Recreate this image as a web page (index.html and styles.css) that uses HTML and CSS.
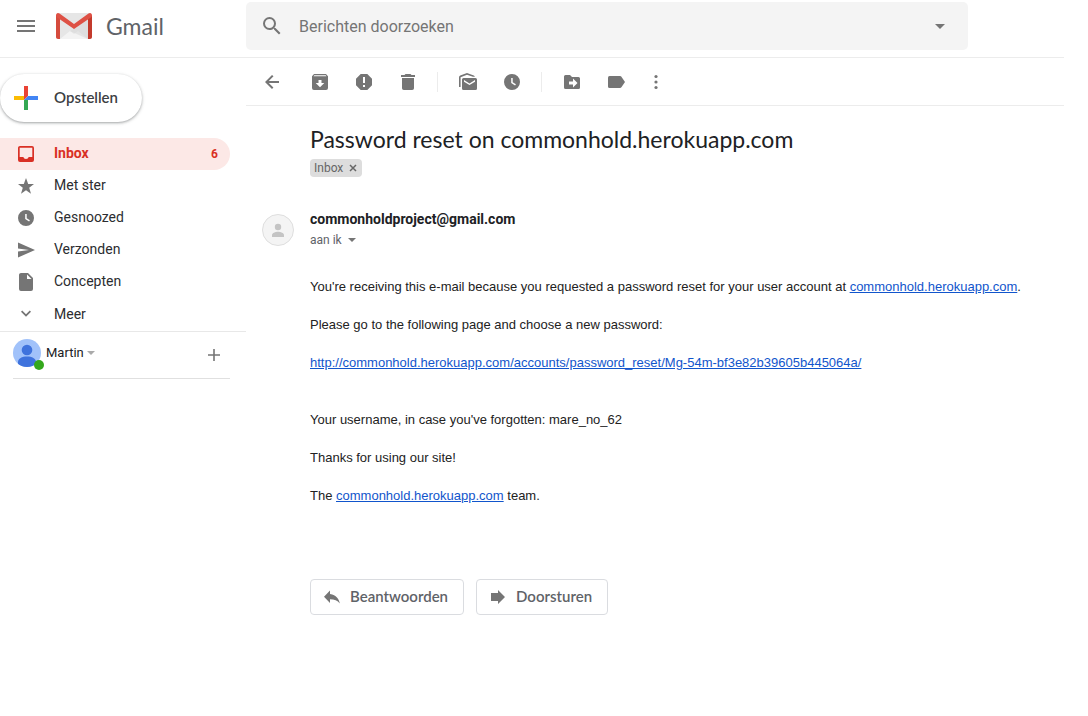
FILE: index.html
```html
<!DOCTYPE html>
<html lang="nl">
<head>
<meta charset="utf-8">
<title>Gmail</title>
<link rel="stylesheet" href="styles.css">
</head>
<body>
<header class="topbar">
  <div class="brand">
    <button class="icon-btn" aria-label="Hoofdmenu"><svg class="icon icon-menu" viewBox="0 0 24 24"><path d="M3 18h18v-2H3v2zm0-5h18v-2H3v2zm0-7v2h18V6H3z"/></svg></button>
    <svg class="logo" viewBox="0 0 36 26" aria-hidden="true">
      <path fill="#e6e6e6" d="M2 0h32v26H2z"/>
      <path fill="#f3f3f3" d="M4 26 14 18l4 3 4-3 10 8z"/>
      <path fill="#d6d6d6" d="M18 16 32 6v20L14 18z" opacity=".5"/>
      <path fill="#d54b3d" d="M0 2.300V24c0 1.200.8 2 2 2h2V5z"/>
      <path fill="#c33a2c" d="M36 2.300V24c0 1.200-.8 2-2 2h-2V5z"/>
      <path fill="#de5145" d="M2 0c.6 0 1 .2 1.500.5L18 11 32.500.5C33 .2 33.400 0 34 0c1.200 0 2 1 2 2.300 0 1-.3 1.500-1.200 2.100L18 16 1.200 4.400C.3 3.800 0 3.300 0 2.300 0 1 .8 0 2 0z"/>
    </svg>
    <span class="brand-name">Gmail</span>
  </div>
  <form class="search" role="search">
    <button class="icon-btn" type="button" aria-label="Zoeken"><svg class="icon icon-search" viewBox="0 0 24 24"><path d="M15.500 14h-.79l-.28-.27A6.471 6.471 0 0 0 16 9.500 6.500 6.500 0 1 0 9.500 16c1.610 0 3.090-.59 4.230-1.570l.27.28v.79l5 4.990L20.490 19l-4.990-5zm-6 0C7.010 14 5 11.990 5 9.500S7.010 5 9.500 5 14 7.010 14 9.500 11.990 14 9.500 14z"/></svg></button>
    <input class="search-input" type="text" aria-label="Berichten doorzoeken" placeholder="Berichten doorzoeken">
    <button class="icon-btn" type="button" aria-label="Zoekopties"><svg class="icon icon-search" viewBox="0 0 24 24"><path d="m7 10 5 5 5-5z"/></svg></button>
  </form>
</header>
<div class="layout">
  <aside class="sidebar">
    <button class="compose">
      <svg class="compose-plus" viewBox="0 0 24 24"><path fill="#ea4335" d="M10 0h4v10l-4 4z"/><path fill="#fbbc04" d="M0 10h10v4H0z"/><path fill="#34a853" d="M10 14h4v10h-4z"/><path fill="#4285f4" d="M14 10h10v4H10z"/></svg>
      <span class="label">Opstellen</span>
    </button>
    <nav class="folders">
      <a class="folder folder-active" href="#"><svg class="icon" viewBox="0 0 20 20"><path fill-rule="evenodd" d="M4 2h12a2 2 0 0 1 2 2v12a2 2 0 0 1-2 2H4a2 2 0 0 1-2-2V4c0-1.100.9-2 2-2zm-.3 1.700v9.300h3.600a2.800 2.800 0 0 0 5.400 0h3.600V3.700z"/></svg><span class="folder-name">Inbox</span><span class="count">6</span></a>
      <a class="folder" href="#"><svg class="icon" viewBox="0 0 20 20"><path d="m10 14.300 5 3.400-1.800-6L18 8h-5.800L10 2 7.800 8H2l4.800 3.700-1.800 6z"/></svg><span class="folder-name">Met ster</span></a>
      <a class="folder" href="#"><svg class="icon" viewBox="0 0 20 20"><path fill-rule="evenodd" d="M10 2a8 8 0 1 0 0 16 8 8 0 0 0 0-16zM9.200 6h1.500v4.300l3.200 2-.8 1.300-3.900-2.500z"/></svg><span class="folder-name">Gesnoozed</span></a>
      <a class="folder" href="#"><svg class="icon" viewBox="0 0 20 20"><path d="M2 2.500 19 10 2 17.500v-6L13 10 2 8.500z"/></svg><span class="folder-name">Verzonden</span></a>
      <a class="folder" href="#"><svg class="icon" viewBox="0 0 20 20"><path fill-rule="evenodd" d="M5 1h7l5 5v11a2 2 0 0 1-2 2H5a2 2 0 0 1-2-2V3c0-1.100.9-2 2-2zm6 1.500V7h4.500z"/></svg><span class="folder-name">Concepten</span></a>
      <a class="folder folder-more" href="#"><svg class="icon" viewBox="0 0 20 20"><path d="m6.200 6.500 3.800 3.800 3.800-3.800 1.200 1.200-5 5-5-5z"/></svg><span class="folder-name">Meer</span></a>
    </nav>
    <section class="account">
      <div class="account-avatar">
        <svg class="account-face" viewBox="0 0 28 28"><defs><clipPath id="face"><circle cx="14" cy="14" r="14"/></clipPath></defs><g clip-path="url(#face)"><path fill="#a1c2fa" d="M0 0h28v28H0z"/><circle cx="14" cy="11" r="5.300" fill="#3f73dd"/><path fill="#3f73dd" d="M5 23c0-3.500 4-5.500 9-5.500s9 2 9 5.500v5H5z"/></g></svg>
        <span class="presence"></span>
      </div>
      <button class="account-name">Martin<svg class="caret" viewBox="0 0 8 4"><path d="M0 0h8L4 4z"/></svg></button>
      <button class="icon-btn account-add" aria-label="Nieuwe chat"><svg class="icon" viewBox="0 0 20 20"><path d="M9.200 4h1.600v5.200H16v1.600h-5.200V16H9.200v-5.200H4V9.200h5.200z"/></svg></button>
    </section>
  </aside>
  <main class="main">
    <div class="toolbar">
      <button class="tool tool-back" aria-label="Terug"><svg class="icon" viewBox="0 0 20 20"><path d="M17 9H6.800l4.700-4.700L10 3l-7 7 7 7 1.400-1.400L6.800 11H17z"/></svg></button>
      <button class="tool" aria-label="Archiveren"><svg class="icon" viewBox="0 0 20 20"><path fill-rule="evenodd" d="M4 2h12l2 2.300V16a2 2 0 0 1-2 2H4a2 2 0 0 1-2-2V4.300zm.3 1.200-.8 1h13l-.8-1zM8.500 8v3H5.700l4.300 4.200 4.300-4.200h-2.800V8z"/></svg></button>
      <button class="tool" aria-label="Spam melden"><svg class="icon" viewBox="0 0 20 20"><path fill-rule="evenodd" d="M6.700 2h6.600L18 6.700v6.600L13.300 18H6.700L2 13.300V6.700zM9 5v6h2V5zm0 8v2h2v-2z"/></svg></button>
      <button class="tool" aria-label="Verwijderen"><svg class="icon" viewBox="0 0 20 20"><path d="M7.500 2h5l1 1H17v2H3V3h3.500zM4 6h12v10.200a1.800 1.800 0 0 1-1.800 1.800H5.800A1.800 1.800 0 0 1 4 16.200z"/></svg></button>
      <span class="divider"></span>
      <button class="tool" aria-label="Markeren als ongelezen"><svg class="icon" viewBox="0 0 20 20"><path fill-rule="evenodd" d="M5.500 6H17.500A1.500 1.500 0 0 1 19 7.500v9a1.500 1.500 0 0 1-1.500 1.500h-12A1.500 1.500 0 0 1 4 16.500v-9A1.500 1.500 0 0 1 5.500 6zM6 8v1.700l5.500 3.400L17 9.700V8l-5.500 3.400z"/><path d="M1 15V5.500C1 4.700 1.400 4 2.200 3.600L9 1l6.800 2.600c.5.200.9.600 1.100 1.100h-2L9 2.700 2.600 5.200V15z"/></svg></button>
      <button class="tool" aria-label="Snoozen"><svg class="icon" viewBox="0 0 20 20"><path fill-rule="evenodd" d="M10 2a8 8 0 1 0 0 16 8 8 0 0 0 0-16zM9.200 6h1.500v4.300l3.200 2-.8 1.300-3.900-2.500z"/></svg></button>
      <span class="divider"></span>
      <button class="tool" aria-label="Verplaatsen naar"><svg class="icon" viewBox="0 0 20 20"><path fill-rule="evenodd" d="M3.500 3H8l2 2h6.500A1.500 1.500 0 0 1 18 6.500v9a1.500 1.500 0 0 1-1.500 1.500h-13A1.500 1.500 0 0 1 2 15.500v-11A1.500 1.500 0 0 1 3.500 3zM7 9.500v3h4v3l4.500-4.500L11 6.500v3z"/></svg></button>
      <button class="tool" aria-label="Labels"><svg class="icon" viewBox="0 0 20 20"><path d="M3.500 4H14c.6 0 1.100.3 1.400.7L19 10l-3.600 5.300c-.3.400-.8.700-1.400.7H3.500A1.500 1.500 0 0 1 2 14.500v-9A1.500 1.500 0 0 1 3.500 4z"/></svg></button>
      <button class="tool tool-more" aria-label="Meer"><svg class="icon" viewBox="0 0 20 20"><circle cx="10" cy="4.500" r="1.600"/><circle cx="10" cy="10" r="1.600"/><circle cx="10" cy="15.500" r="1.600"/></svg></button>
    </div>
    <article class="mail">
      <h1 class="subject">Password reset on commonhold.herokuapp.com</h1>
      <div class="chip">Inbox<button class="chip-x" aria-label="Label verwijderen"><svg class="chip-icon" viewBox="0 0 8 8"><path d="m1 1 6 6M7 1 1 7"/></svg></button></div>
      <div class="sender">
        <svg class="sender-avatar" viewBox="0 0 32 32"><circle cx="16" cy="16" r="15.500" fill="#f4f4f4" stroke="#dedede"/><circle cx="16" cy="13" r="3.200" fill="#c4c4c4"/><path fill="#c4c4c4" d="M10 23v-1.800c0-2.200 3.400-3.400 6-3.400s6 1.200 6 3.400V23z"/></svg>
        <div class="sender-info">
          <h2 class="sender-name">commonholdproject@gmail.com</h2>
          <button class="recipient">aan ik<svg class="caret" viewBox="0 0 8 4"><path d="M0 0h8L4 4z"/></svg></button>
        </div>
      </div>
      <div class="message">
        <p>You're receiving this e-mail because you requested a password reset for your user account at <a href="#">commonhold.herokuapp.com</a>.</p>
        <p>Please go to the following page and choose a new password:</p>
        <p class="reset-link"><a href="#">http://commonhold.herokuapp.com/accounts/password_reset/Mg-54m-bf3e82b39605b445064a/</a></p>
        <p>Your username, in case you've forgotten: mare_no_62</p>
        <p>Thanks for using our site!</p>
        <p>The <a href="#">commonhold.herokuapp.com</a> team.</p>
      </div>
      <div class="actions">
        <button class="action"><svg class="icon" viewBox="0 0 20 20"><path d="M8 7V3.500L2 9.700 8 16v-3.700c4.300 0 7.600 1.300 9.800 4.200C17 12 14.300 7.900 8 7z"/></svg><span class="label">Beantwoorden</span></button>
        <button class="action"><svg class="icon" viewBox="0 0 20 20"><path d="M3 6h7V3l7 7-7 7v-3H3z"/></svg><span class="label">Doorsturen</span></button>
      </div>
    </article>
  </main>
</div>
</body>
</html>
```
FILE: styles.css
```css
* { box-sizing: border-box; }
body {
  margin: 0;
  padding-right: 24px;
  background: #fff;
  color: #202124;
  font: 14px/20px Roboto, sans-serif;
}
button {
  display: flex;
  align-items: center;
  margin: 0;
  padding: 0;
  border: 0;
  background: none;
  color: inherit;
  font: inherit;
  cursor: pointer;
}
h1, h2, p { margin: 0; }
svg { display: block; flex: none; fill: #757575; }
.icon { width: 20px; height: 20px; }
.icon-menu, .icon-search { width: 24px; height: 24px; }
.label { padding-bottom: 2px; }

.topbar {
  display: flex;
  height: 58px;
  padding-top: 2px;
  border-bottom: 1px solid #ececec;
}
.brand {
  display: flex;
  align-items: center;
  width: 246px;
  height: 48px;
  padding-left: 14px;
}
.logo { width: 36px; height: 26px; margin-left: 18px; }
.brand-name {
  margin-left: 14px;
  color: #5f6368;
  font: 23px/28px Lato, sans-serif;
}
.search {
  display: flex;
  flex: 1;
  align-items: center;
  height: 48px;
  margin-right: 96px;
  padding: 0 16px 0 14px;
  border-radius: 5px;
  background: #f4f4f4;
}
.search-input {
  flex: 1;
  min-width: 0;
  height: 32px;
  padding: 0 0 0 15px;
  border: 0;
  background: none;
  outline: 0;
  font: 16px/24px Roboto, sans-serif;
}
.search-input::placeholder { color: #757575; opacity: 1; }

.layout { display: flex; }
.sidebar { flex: none; width: 246px; padding-top: 16px; }
.compose {
  height: 48px;
  padding: 0 24px 0 14px;
  border-radius: 24px;
  box-shadow: 0 1px 2px rgba(60, 64, 67, .3), 0 1px 3px 1px rgba(60, 64, 67, .15);
  color: #3c4043;
  font: 600 15px/20px Lato, sans-serif;
}
.compose-plus { width: 24px; height: 24px; margin-right: 16px; }
.folders { padding: 16px 16px 1px 0; }
.folder {
  display: flex;
  align-items: center;
  height: 32px;
  padding: 0 12px 0 16px;
  border-radius: 0 16px 16px 0;
  color: #2c2d30;
  text-decoration: none;
}
.folder-name { flex: 1; margin-left: 18px; padding-bottom: 2px; }
.folder-active { background: #fce8e6; color: #d93025; font-weight: bold; }
.folder-active .icon { fill: #d93025; }
.folder-more .folder-name { padding-bottom: 0; }
.count { font-size: 12px; }
.account {
  display: flex;
  height: 48px;
  padding: 7px 22px 0 13px;
  border-top: 1px solid #e8e8e8;
  background: linear-gradient(#e0e0e0, #e0e0e0) 13px 100% / 217px 1px no-repeat;
}
.account-avatar { position: relative; width: 28px; height: 28px; }
.account-face { width: 28px; height: 28px; }
.presence {
  position: absolute;
  right: -3px;
  bottom: -3px;
  width: 10px;
  height: 10px;
  border-radius: 50%;
  background: #34a81c;
}
.account-name { height: 28px; margin-left: 5px; font-size: 13px; }
.account-name .caret { margin-left: 3px; fill: #aaa; }
.account-add { height: 32px; margin-left: auto; margin-right: -16px; padding-right: 16px; }
.caret { width: 8px; height: 4px; margin-left: 6px; }

.main { flex: 1; min-width: 0; }
.toolbar {
  display: flex;
  align-items: center;
  height: 48px;
  padding-left: 14px;
  border-bottom: 1px solid #ececec;
}
.tool { justify-content: center; width: 44px; height: 32px; }
.tool-back { width: 24px; margin-right: 14px; }
.tool-more { width: 36px; }
.divider { width: 1px; height: 20px; margin: 0 8px 0 7px; background: #ececec; }
.mail { padding: 19px 0 32px 64px; }
.subject { font: 23px/28px Lato, sans-serif; }
.chip {
  display: flex;
  align-items: center;
  width: max-content;
  height: 18px;
  margin-top: 6px;
  padding: 0 5px 0 4px;
  border-radius: 4px;
  background: #ddd;
  color: #666;
  font-size: 12px;
}
.chip-x { margin-left: 6px; }
.chip-icon { width: 8px; height: 8px; stroke: #666; stroke-width: 1.5; }
.sender { display: flex; margin: 32px 0 0 -48px; }
.sender-avatar { width: 32px; height: 32px; margin-top: 5px; }
.sender-info { margin-left: 16px; }
.sender-name { font: bold 14px/20px Roboto, sans-serif; }
.recipient { color: #5f6368; font-size: 12px; line-height: 22px; }
.message {
  margin-top: 26px;
  color: #222;
  font: 13px/19px "Liberation Sans", Arial, sans-serif;
}
.message p { margin-bottom: 19px; }
.message .reset-link { margin-bottom: 38px; }
.message a { color: #15c; }
.actions { display: flex; gap: 12px; margin-top: 74px; }
.action {
  height: 36px;
  padding: 0 15px 0 11px;
  border: 1px solid #dadce0;
  border-radius: 4px;
  color: #5f6368;
  font: 600 15px/20px Lato, sans-serif;
}
.action .icon { margin-right: 8px; }
```
